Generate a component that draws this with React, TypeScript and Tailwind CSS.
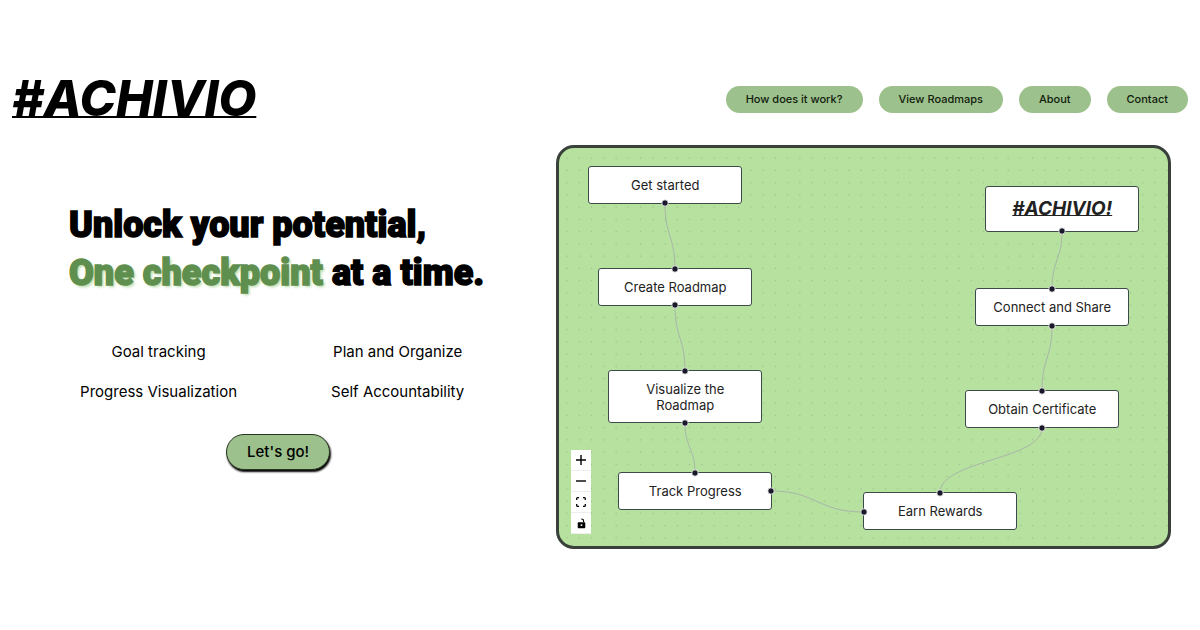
const navItems = ["How does it work?", "View Roadmaps", "About", "Contact"];
const features = ["Goal tracking", "Plan and Organize", "Progress Visualization", "Self Accountability"];

type RoadmapNode = { label: string; place: string; brand?: boolean };

const nodes: RoadmapNode[] = [
  { label: "Get started", place: "left-[29px] top-[18px] h-[38px]" },
  { label: "Create Roadmap", place: "left-[39px] top-[120px] h-[38px]" },
  { label: "Visualize the Roadmap", place: "left-[49px] top-[222px] h-[53px]" },
  { label: "Track Progress", place: "left-[59px] top-[324px] h-[38px]" },
  { label: "Earn Rewards", place: "left-[304px] top-[344px] h-[38px]" },
  { label: "Obtain Certificate", place: "left-[406px] top-[242px] h-[38px]" },
  { label: "Connect and Share", place: "left-[416px] top-[140px] h-[38px]" },
  { label: "#ACHIVIO!", place: "left-[426px] top-[38px] h-[46px]", brand: true },
];

const edges = [
  "M106 56 C106 88 116 88 116 121",
  "M116 158 C116 190 126 190 126 223",
  "M126 275 C126 300 136 300 136 325",
  "M212 343 C258 343 258 364 305 364",
  "M381 345 C381 312 483 312 483 280",
  "M483 243 C483 210 493 210 493 178",
  "M493 141 C493 112 503 112 503 83",
];

const handles = [
  [106, 55], [116, 121], [116, 157], [126, 223], [126, 275], [136, 325], [212, 343],
  [305, 364], [381, 345], [483, 280], [483, 243], [493, 178], [493, 141], [503, 83],
];

function Header() {
  return (
    <header className="flex items-center justify-between px-3">
      <a href="#" className="text-[49px] leading-[56px] font-extrabold italic underline decoration-2 underline-offset-0 [text-decoration-skip-ink:none]">
        #ACHIVIO
      </a>
      <nav className="flex gap-4">
        {navItems.map((item) => (
          <a key={item} href="#" className="rounded-full bg-[#9dc18c] px-5 text-[11px] leading-[27px] font-medium text-[#10200c]">
            {item}
          </a>
        ))}
      </nav>
    </header>
  );
}

function Hero() {
  return (
    <section className="min-w-0 flex-1 pt-14">
      <h1 className="pl-[69px] font-['Roboto'] text-[36px] leading-[48px] font-black whitespace-nowrap [-webkit-text-stroke:1.5px_currentColor]">
        Unlock your potential,
        <br />
        <span className="text-[#5f8f4f] [text-shadow:2px_2px_3px_#b5d8a5]">One checkpoint</span> at a time.
      </h1>
      <ul className="mt-[35px] grid grid-cols-2 px-[39px] text-center text-[15px] leading-10">
        {features.map((feature) => (
          <li key={feature}>{feature}</li>
        ))}
      </ul>
      <div className="mt-[22px] flex justify-center">
        <button className="h-9 rounded-full border border-[#26331f] bg-[#9dc18c] px-5 text-[15px] font-medium shadow-[1px_2px_2px_#000]">
          Let's go!
        </button>
      </div>
    </section>
  );
}

function Controls() {
  const cell = "flex h-[21px] w-5 items-center justify-center border-b border-[#eeeeee]";
  return (
    <div className="absolute bottom-3 left-3 bg-white">
      <button aria-label="Zoom in" className={cell}>
        <svg viewBox="0 0 10 10" className="size-[10px]"><path d="M5 0v10M0 5h10" stroke="#000" strokeWidth="1.4" /></svg>
      </button>
      <button aria-label="Zoom out" className={cell}>
        <svg viewBox="0 0 10 10" className="size-[10px]"><path d="M0 5h10" stroke="#000" strokeWidth="1.4" /></svg>
      </button>
      <button aria-label="Fit view" className={cell}>
        <svg viewBox="0 0 10 10" className="size-[10px]" fill="none"><path d="M.7 3V1.6q0-.9.9-.9H3M7 .7h1.4q.9 0 .9.9V3M9.3 7v1.4q0 .9-.9.9H7M3 9.3H1.6q-.9 0-.9-.9V7" stroke="#000" strokeWidth="1.3" /></svg>
      </button>
      <button aria-label="Toggle interactivity" className={cell}>
        <svg viewBox="0 0 10 12" className="h-[11px] w-[9px]" fill="none">
          <path fillRule="evenodd" d="M1.8 4.5h6.4q1 0 1 1v4.7q0 1-1 1H1.8q-1 0-1-1V5.500q0-1 1-1M5 6.700a1.100 1.100 0 1 0 0 2.200a1.100 1.100 0 1 0 0-2.200" fill="#000" />
          <path d="M7.300 4.600V3Q7.300 1 4.700 1" stroke="#000" strokeWidth="1.2" />
        </svg>
      </button>
    </div>
  );
}

function Roadmap() {
  return (
    <section className="relative h-[404px] w-[52.5%] shrink-0 overflow-hidden rounded-[18px] border-3 border-[#3a403a] bg-[#b6e19f] bg-[radial-gradient(circle,#98bd87_0.6px,transparent_1px)] bg-[size:12.25px_12.25px] bg-[position:2px_4px]">
      {nodes.map((node) => (
        <div key={node.label} className={`absolute flex w-[154px] items-center justify-center rounded-[3px] border border-[#3d4a4a] bg-white px-6 text-center text-[#222] ${node.place}`}>
          {node.brand ? (
            <span className="text-[19px] font-bold italic underline decoration-1 underline-offset-0 [text-decoration-skip-ink:none]">{node.label}</span>
          ) : (
            <span className="-mx-4 max-w-[125px] text-[13px] leading-4">{node.label}</span>
          )}
        </div>
      ))}
      <svg className="pointer-events-none absolute top-0 left-0 h-[398px] w-[608px]" viewBox="0 0 608 398" fill="none">
        {edges.map((d) => (
          <path key={d} d={d} stroke="#a9b5aa" strokeWidth="1" />
        ))}
        {handles.map(([x, y]) => (
          <circle key={`${x}-${y}`} cx={x} cy={y} r="3.2" fill="#1a192b" stroke="#fff" strokeWidth="0.8" />
        ))}
      </svg>
      <Controls />
    </section>
  );
}

export default function App() {
  return (
    <div className="min-h-screen bg-white pt-[71px] font-['Inter',sans-serif] text-black">
      <Header />
      <main className="mt-[18px] flex pr-[29px]">
        <Hero />
        <Roadmap />
      </main>
    </div>
  );
}
